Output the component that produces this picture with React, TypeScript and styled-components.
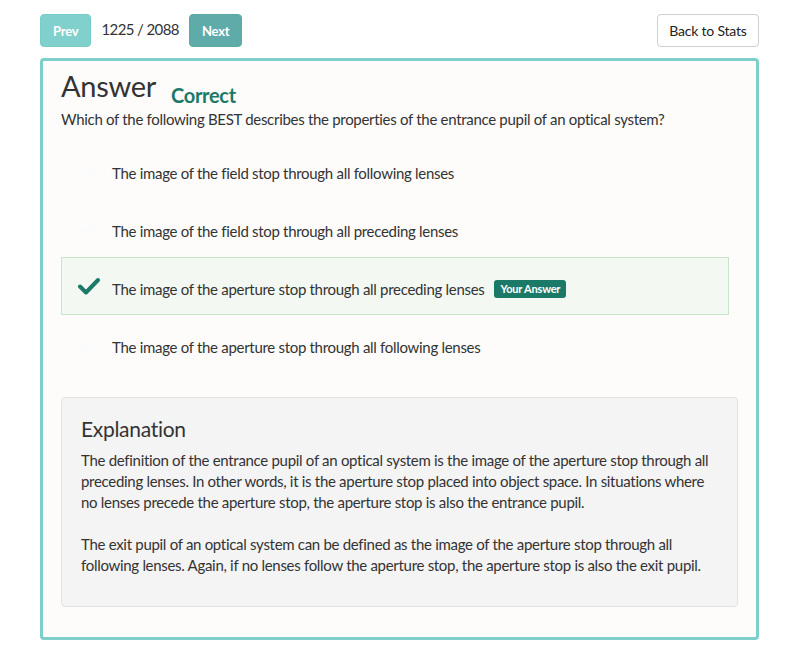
import React from "react";
import styled, { createGlobalStyle } from "styled-components";

const Global = createGlobalStyle`
  html, body { margin: 0; padding: 0; background: #ffffff; }
  body { font-family: Lato, "Open Sans", sans-serif; color: #333; letter-spacing: -0.3px; }
  * { box-sizing: border-box; }
`;

const Page = styled.div`
  width: 800px;
  padding: 14px 40px 24px 40px;
`;

const Toolbar = styled.div`
  display: flex;
  align-items: center;
  height: 33px;
`;

const NavButton = styled.button<{ $dark?: boolean }>`
  height: 33px;
  padding: 0 12px;
  border: 1px solid ${(p) => (p.$dark ? "#5aa9a6" : "#78cbc8")};
  background: ${(p) => (p.$dark ? "#5fabaa" : "#80d0cd")};
  color: #fff;
  font-family: Lato, sans-serif;
  font-weight: 700;
  font-size: 13px;
  letter-spacing: -0.2px;
  border-radius: 4px;
`;

const Counter = styled.span`
  font-size: 15px;
  color: #333;
  margin: 0 10px;
  padding-bottom: 3px;
  letter-spacing: -0.6px;
`;

const Spacer = styled.div`
  flex: 1;
`;

const BackButton = styled.button`
  height: 33px;
  width: 102px;
  margin-right: 1px;
  border: 1px solid #cfcfcf;
  background: #fff;
  color: #222;
  font-family: Lato, sans-serif;
  font-size: 14px;
  letter-spacing: -0.2px;
  border-radius: 4px;
`;

const Card = styled.div`
  margin-top: 11px;
  width: 719px;
  border: 3px solid #7ecfcc;
  border-radius: 4px;
  background: #fdfcfb;
  padding: 8px 18px 30px 18px;
`;

const TitleRow = styled.div`
  display: flex;
  align-items: flex-start;
  height: 34px;
`;

const Title = styled.h1`
  margin: 0;
  font-size: 29px;
  font-weight: 400;
  color: #333;
  line-height: 34px;
`;

const Status = styled.span`
  margin: 14px 0 0 15px;
  font-size: 20px;
  line-height: 24px;
  font-weight: 700;
  color: #1b7a67;
`;

const Question = styled.p`
  margin: 6px 0 0 0;
  font-size: 15px;
  line-height: 20px;
  color: #333;
`;

const Options = styled.div`
  margin: 12px 9px 0 0;
  display: flex;
  flex-direction: column;
`;

const Option = styled.div<{ $selected?: boolean }>`
  display: flex;
  align-items: center;
  height: 58px;
  padding: 5px 0 0 16px;
  border: 1px solid ${(p) => (p.$selected ? "#c9e5c9" : "transparent")};
  background: ${(p) => (p.$selected ? "#f3f9f2" : "transparent")};
  font-size: 15px;
  color: #333;
`;

const CheckSlot = styled.span<{ $visible?: boolean }>`
  width: 34px;
  display: flex;
  align-items: center;
  margin-top: -5px;
  color: ${(p) => (p.$visible ? "#1c7a6a" : "#fbfbfb")};
`;

const Badge = styled.span`
  margin-left: 10px;
  background: #1a7a67;
  color: #fff;
  font-size: 11px;
  font-weight: 700;
  padding: 3px 6px;
  border-radius: 3px;
  line-height: 12px;
  letter-spacing: -0.2px;
`;

const Explanation = styled.div`
  margin-top: 24px;
  background: #f4f4f4;
  border: 1px solid #e2e2e2;
  border-radius: 4px;
  padding: 16px 19px 30px 19px;
`;

const ExplanationTitle = styled.h2`
  margin: 0 0 6px 0;
  font-size: 21px;
  font-weight: 400;
  color: #333;
  line-height: 30px;
`;

const Para = styled.p`
  margin: 0 0 21px 0;
  font-size: 15px;
  line-height: 21px;
  color: #333;
  &:last-child { margin-bottom: 0; }
`;

const Check = () => (
  <svg width="22" height="18" viewBox="0 0 22 18">
    <path d="M2 9.5 L8 15.5 L20 3" fill="none" stroke="currentColor" strokeWidth="4" strokeLinecap="round" strokeLinejoin="round" />
  </svg>
);

const options = [
  "The image of the field stop through all following lenses",
  "The image of the field stop through all preceding lenses",
  "The image of the aperture stop through all preceding lenses",
  "The image of the aperture stop through all following lenses",
];

export default function App() {
  return (
    <Page>
      <Global />
      <Toolbar>
        <NavButton>Prev</NavButton>
        <Counter>1225 / 2088</Counter>
        <NavButton $dark>Next</NavButton>
        <Spacer />
        <BackButton>Back to Stats</BackButton>
      </Toolbar>
      <Card>
        <TitleRow>
          <Title>Answer</Title>
          <Status>Correct</Status>
        </TitleRow>
        <Question>
          Which of the following BEST describes the properties of the entrance pupil of an optical system?
        </Question>
        <Options>
          {options.map((o, i) => (
            <Option key={o} $selected={i === 2}>
              <CheckSlot $visible={i === 2}>
                <Check />
              </CheckSlot>
              {o}
              {i === 2 && <Badge>Your Answer</Badge>}
            </Option>
          ))}
        </Options>
        <Explanation>
          <ExplanationTitle>Explanation</ExplanationTitle>
          <Para>
            The definition of the entrance pupil of an optical system is the image of the aperture stop through all
            preceding lenses. In other words, it is the aperture stop placed into object space. In situations where
            no lenses precede the aperture stop, the aperture stop is also the entrance pupil.
          </Para>
          <Para>
            The exit pupil of an optical system can be defined as the image of the aperture stop through all
            following lenses. Again, if no lenses follow the aperture stop, the aperture stop is also the exit pupil.
          </Para>
        </Explanation>
      </Card>
    </Page>
  );
}
